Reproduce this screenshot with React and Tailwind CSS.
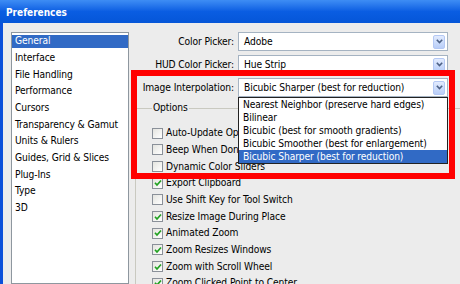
const categories = [
  "General",
  "Interface",
  "File Handling",
  "Performance",
  "Cursors",
  "Transparency & Gamut",
  "Units & Rulers",
  "Guides, Grid & Slices",
  "Plug-Ins",
  "Type",
  "3D",
];

const options = [
  { label: "Auto-Update Open Documents", checked: false },
  { label: "Beep When Done", checked: false },
  { label: "Dynamic Color Sliders", checked: false },
  { label: "Export Clipboard", checked: true },
  { label: "Use Shift Key for Tool Switch", checked: false },
  { label: "Resize Image During Place", checked: true },
  { label: "Animated Zoom", checked: true },
  { label: "Zoom Resizes Windows", checked: true },
  { label: "Zoom with Scroll Wheel", checked: true },
  { label: "Zoom Clicked Point to Center", checked: true },
];

const interpolations = [
  "Nearest Neighbor (preserve hard edges)",
  "Bilinear",
  "Bicubic (best for smooth gradients)",
  "Bicubic Smoother (best for enlargement)",
  "Bicubic Sharper (best for reduction)",
];

function ArrowButton() {
  return (
    <div className="mr-[2px] flex h-[14px] w-[12px] items-center justify-center rounded-[2px] border border-[#B4C8F4] bg-gradient-to-b from-[#E2EBFE] to-[#B9CEF8]">
      <svg width="7" height="5" viewBox="0 0 7 5">
        <path d="M0.8 0.8 L3.5 3.6 L6.2 0.8" fill="none" stroke="#4D6185" strokeWidth="1.6" />
      </svg>
    </div>
  );
}

function Combo({ label, value }) {
  return (
    <div className="flex h-[19px] items-center">
      <div className="w-[105px] shrink-0 whitespace-nowrap text-right">{label}</div>
      <div className="ml-[4px] flex h-[19px] w-[210px] shrink-0 items-center justify-between border border-[#A5B3C2] bg-white">
        <span className="pl-[5px] whitespace-nowrap">{value}</span>
        <ArrowButton />
      </div>
    </div>
  );
}

function CheckBox({ checked }) {
  return (
    <div className="flex h-[11px] w-[11px] shrink-0 items-center justify-center border border-[#8A9099] bg-gradient-to-br from-[#E4E4DF] to-white">
      {checked ? (
        <svg width="8" height="8" viewBox="0 0 8 8">
          <path d="M1 3.8 L3 6 L7 1.5" fill="none" stroke="#21A121" strokeWidth="1.7" />
        </svg>
      ) : null}
    </div>
  );
}

export default function App() {
  return (
    <div className="relative h-[284px] w-[460px] overflow-hidden bg-[#ECECEC] font-['DejaVu_Sans_Condensed','DejaVu_Sans',sans-serif] text-[10.2px] leading-[12px] tracking-[-0.1px] text-black">
      <div className="flex h-[23px] items-center bg-gradient-to-b from-[#3E8DF4] via-[#0A5DE2] to-[#0556D8] pl-[6px] pt-[3px] text-[10px] font-bold tracking-[0px] text-white">
        Preferences
      </div>
      <div className="flex h-[261px] border-l-[3px] border-[#0B50DA]">
        <div className="ml-[8px] mt-[9px] w-[118px] shrink-0 border border-[#8E979F] bg-white">
          {categories.map((name, i) => (
            <div key={name} className="flex h-[16.67px] items-center">
              <div
                className={`flex h-[13.5px] w-full items-center whitespace-nowrap pl-[3px] ${
                  i === 0 ? "bg-[#316AC5] text-white" : ""
                }`}
              >
                {name}
              </div>
            </div>
          ))}
        </div>
        <div className="min-w-0 flex-1 pt-[9px]">
          <div className="flex flex-col gap-[4px]">
            <Combo label="Color Picker:" value="Adobe" />
            <Combo label="HUD Color Picker:" value="Hue Strip" />
            <Combo label="Image Interpolation:" value="Bicubic Sharper (best for reduction)" />
          </div>
          <fieldset className="ml-[6px] mt-[4px] w-[340px] border border-[#C9C9C0] pl-[16px] pt-[10px]">
            <legend className="px-[1px] leading-[14px]">Options</legend>
            {options.map((opt) => (
              <div key={opt.label} className="flex h-[16.67px] items-center gap-[3px] whitespace-nowrap">
                <CheckBox checked={opt.checked} />
                <span>{opt.label}</span>
              </div>
            ))}
          </fieldset>
        </div>
      </div>

      <div className="absolute left-[238px] top-[97px] w-[210px] border border-[#222] bg-white">
        {interpolations.map((item, i) => (
          <div
            key={item}
            className={`flex h-[13px] items-center whitespace-nowrap pl-[4px] ${
              i === interpolations.length - 1 ? "bg-[#316AC5] text-white" : ""
            }`}
          >
            {item}
          </div>
        ))}
      </div>

      <div className="absolute left-[131px] top-[70px] h-[109px] w-[324px] border-[6px] border-[#FF0000]" />
    </div>
  );
}
